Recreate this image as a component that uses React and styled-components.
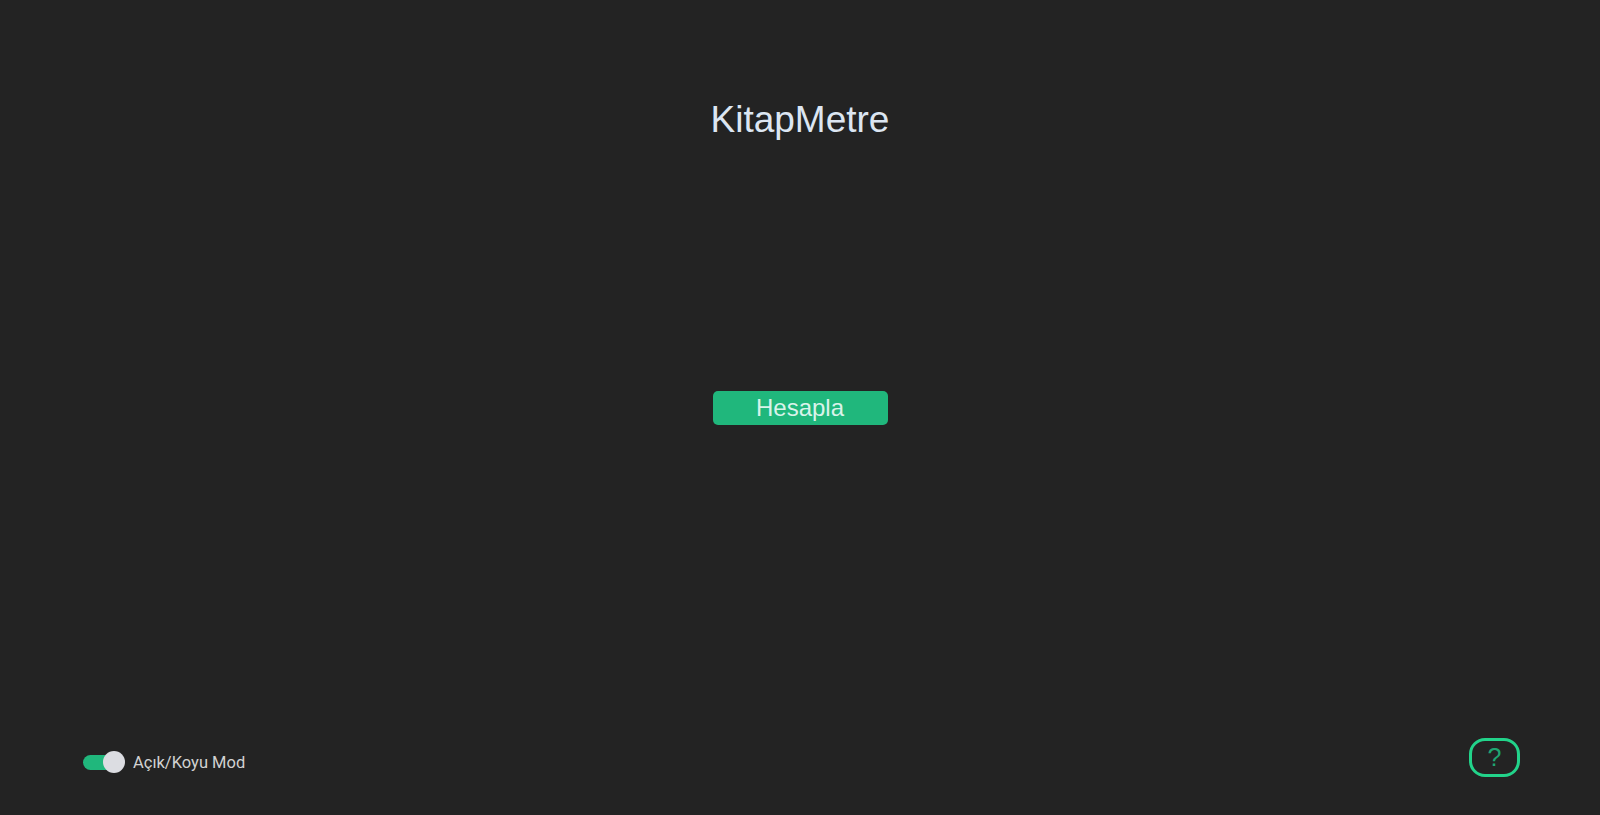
import React, { useState } from "react";
import styled, { createGlobalStyle } from "styled-components";

const Global = createGlobalStyle`
  html, body { margin: 0; padding: 0; background: #232323; }
  body { font-family: "Liberation Sans", Arial, sans-serif; }
`;

const Page = styled.div`
  width: 1600px;
  height: 815px;
  background: #232323;
  display: flex;
  flex-direction: column;
  align-items: center;
  box-sizing: border-box;
`;

const Title = styled.h1`
  margin: 95px 0 0;
  font-family: "Liberation Sans", Arial, sans-serif;
  font-weight: 400;
  font-size: 37px;
  line-height: 50px;
  color: #dce6f2;
`;

const Main = styled.main`
  flex: 1;
  display: flex;
  justify-content: center;
  padding-top: 246px;
`;

const Button = styled.button`
  width: 175px;
  height: 34px;
  border: none;
  border-radius: 5px;
  background: #20b77c;
  color: #d9f3ea;
  font-family: "Liberation Sans", Arial, sans-serif;
  font-size: 24px;
  padding: 0;
  cursor: pointer;
`;

const Footer = styled.footer`
  width: 100%;
  box-sizing: border-box;
  display: flex;
  justify-content: space-between;
  align-items: center;
  padding: 0 80px 38px 83px;
`;

const ToggleWrap = styled.label`
  display: flex;
  align-items: center;
  gap: 10px;
  font-family: Roboto, "Noto Sans", sans-serif;
  font-size: 16.5px;
  color: #d2d2d2;
  cursor: pointer;
  margin-top: 9px;
`;

const Track = styled.span`
  position: relative;
  width: 40px;
  height: 15px;
  border-radius: 8px;
  background: ${(p) => (p.$on ? "#20b77c" : "#666")};
  display: inline-block;
`;

const Thumb = styled.span`
  position: absolute;
  top: -4px;
  left: ${(p) => (p.$on ? "20px" : "0")};
  width: 22px;
  height: 22px;
  border-radius: 50%;
  background: #dcdde2;
`;

const Help = styled.button`
  width: 51px;
  height: 39px;
  box-sizing: border-box;
  border: 3px solid #22d38a;
  border-radius: 16px;
  background: transparent;
  color: #1fa672;
  font-family: "Liberation Sans", Arial, sans-serif;
  font-size: 25px;
  padding: 0;
  display: flex;
  align-items: center;
  justify-content: center;
  cursor: pointer;
`;

export default function App() {
  const [dark, setDark] = useState(true);
  return (
    <>
      <Global />
      <Page>
        <Title>KitapMetre</Title>
        <Main>
          <div>
            <Button>Hesapla</Button>
          </div>
        </Main>
        <Footer>
          <ToggleWrap onClick={() => setDark(!dark)}>
            <Track $on={dark}>
              <Thumb $on={dark} />
            </Track>
            Açık/Koyu Mod
          </ToggleWrap>
          <Help>?</Help>
        </Footer>
      </Page>
    </>
  );
}
